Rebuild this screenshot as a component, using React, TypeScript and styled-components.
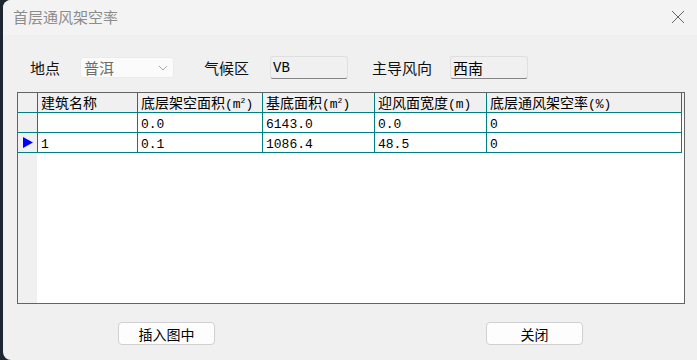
import React from "react";
import styled, { createGlobalStyle } from "styled-components";

const Global = createGlobalStyle`
  html, body { margin: 0; padding: 0; background: #1d2731; }
  body { width: 697px; height: 360px; overflow: hidden; }
  * { box-sizing: border-box; }
`;

const Window = styled.div`
  margin-left: 3px;
  width: 694px;
  height: 360px;
  background: #f0f0f0;
  border-radius: 8px 0 0 8px;
  overflow: hidden;
  display: flex;
  flex-direction: column;
  font-family: "Noto Sans CJK SC", sans-serif;
`;

const TitleBar = styled.div`
  height: 35px;
  background: #f3f3f3;
  display: flex;
  align-items: center;
  justify-content: space-between;
  padding: 0 12px 2px 10px;
  flex-shrink: 0;
`;

const Title = styled.span`
  font-size: 15px;
  color: #8c8c8c;
`;

const Content = styled.div`
  display: flex;
  flex-direction: column;
  padding: 21px 0 0 14px;
`;

const FormRow = styled.div`
  display: flex;
  align-items: center;
  height: 23px;
  padding-left: 13px;
`;

const Label = styled.span<{ $w: number }>`
  width: ${(p) => p.$w}px;
  font-size: 15px;
  color: #111;
  white-space: nowrap;
`;

const Combo = styled.div`
  width: 94px;
  height: 21px;
  margin-right: 30px;
  background: #fbfbfb;
  border: 1px solid #ebebeb;
  border-radius: 3px;
  display: flex;
  align-items: center;
  justify-content: space-between;
  padding: 0 5px 0 3px;
  font-size: 15px;
  color: #6d6d6d;
`;

const EditBox = styled.div<{ $mr: number }>`
  width: 78px;
  height: 23px;
  margin-right: ${(p) => p.$mr}px;
  background: #f0f0f0;
  border: 1px solid #dfdfdf;
  border-bottom: 1px solid #858585;
  border-radius: 3px;
  display: flex;
  align-items: center;
  padding-left: 2px;
  font-size: 15px;
  color: #000;
`;

const MonoText = styled.span`
  font-family: "Liberation Mono", "Noto Sans CJK SC", monospace;
  font-size: 14px;
`;

const Grid = styled.div`
  margin-top: 13px;
  width: 668px;
  height: 212px;
  border: 1px solid #646464;
  background: #ffffff;
  position: relative;
  display: flex;
  flex-direction: column;
  overflow: hidden;
`;

const RowHeaderBack = styled.div`
  position: absolute;
  left: 0;
  top: 0;
  bottom: 0;
  width: 19px;
  background: #f0f0f0;
`;

const Row = styled.div<{ $header?: boolean }>`
  display: flex;
  height: 20px;
  width: 664px;
  border-bottom: 1px solid #008080;
  background: ${(p) => (p.$header ? "#f0f0f0" : "#ffffff")};
  position: relative;
`;

const HeaderRowWrap = styled.div`
  background: #f0f0f0;
  position: relative;
`;

const Cell = styled.div<{ $w: number; $header?: boolean }>`
  width: ${(p) => p.$w}px;
  flex-shrink: 0;
  height: 19px;
  line-height: 19px;
  border-right: 1px solid #008080;
  padding-left: 3px;
  font-size: 14px;
  color: #000;
  white-space: nowrap;
  overflow: hidden;
  background: ${(p) => (p.$header ? "#f0f0f0" : "#ffffff")};
`;

const RowHead = styled.div`
  width: 20px;
  flex-shrink: 0;
  height: 19px;
  border-right: 1px solid #008080;
  background: #f0f0f0;
  display: flex;
  align-items: center;
  padding-left: 5px;
`;

const Num = styled.span`
  font-family: "Liberation Mono", monospace;
  font-size: 13px;
`;

const Unit = styled.span`
  font-family: "Liberation Mono", monospace;
  font-size: 13px;
`;

const Sup = styled.span`
  font-size: 8px;
  position: relative;
  top: -5px;
`;

const ButtonRow = styled.div`
  display: flex;
  gap: 271px;
  padding-left: 101px;
  margin-top: 18px;
`;

const Button = styled.div`
  width: 97px;
  height: 23px;
  background: #fdfdfd;
  border: 1px solid #d0d0d0;
  border-radius: 4px;
  display: flex;
  align-items: center;
  justify-content: center;
  font-size: 14px;
  color: #000;
`;

const cols = [100, 125, 112, 112, 195];

const rows = [
  { sel: false, v: ["", "0.0", "6143.0", "0.0", "0"] },
  { sel: true, v: ["1", "0.1", "1086.4", "48.5", "0"] },
];

export default function App() {
  return (
    <>
      <Global />
      <Window>
        <TitleBar>
          <Title>首层通风架空率</Title>
          <svg width="14" height="14" viewBox="0 0 14 14">
            <path d="M1 1 L13 13 M13 1 L1 13" stroke="#666" strokeWidth="1" fill="none" />
          </svg>
        </TitleBar>
        <Content>
          <FormRow>
            <Label $w={50}>地点</Label>
            <Combo>
              <span>普洱</span>
              <svg width="10" height="6" viewBox="0 0 10 6">
                <path d="M1 1 L5 5 L9 1" stroke="#a8a8a8" strokeWidth="1" fill="none" />
              </svg>
            </Combo>
            <Label $w={66}>气候区</Label>
            <EditBox $mr={24}>
              <MonoText>VB</MonoText>
            </EditBox>
            <Label $w={78}>主导风向</Label>
            <EditBox $mr={0}>西南</EditBox>
          </FormRow>
          <Grid>
            <RowHeaderBack />
            <HeaderRowWrap>
              <Row $header>
                <RowHead />
                <Cell $w={cols[0]} $header>建筑名称</Cell>
                <Cell $w={cols[1]} $header>
                  底层架空面积<Unit>(m<Sup>2</Sup>)</Unit>
                </Cell>
                <Cell $w={cols[2]} $header>
                  基底面积<Unit>(m<Sup>2</Sup>)</Unit>
                </Cell>
                <Cell $w={cols[3]} $header>
                  迎风面宽度<Unit>(m)</Unit>
                </Cell>
                <Cell $w={cols[4]} $header>
                  底层通风架空率<Unit>(%)</Unit>
                </Cell>
              </Row>
            </HeaderRowWrap>
            {rows.map((r, i) => (
              <Row key={i}>
                <RowHead>
                  {r.sel && (
                    <svg width="10" height="11" viewBox="0 0 10 11">
                      <path d="M0 0 L10 5.5 L0 11 Z" fill="#0000ff" />
                    </svg>
                  )}
                </RowHead>
                {r.v.map((v, j) => (
                  <Cell key={j} $w={cols[j]}>
                    <Num>{v}</Num>
                  </Cell>
                ))}
              </Row>
            ))}
          </Grid>
          <ButtonRow>
            <Button>插入图中</Button>
            <Button>关闭</Button>
          </ButtonRow>
        </Content>
      </Window>
    </>
  );
}
